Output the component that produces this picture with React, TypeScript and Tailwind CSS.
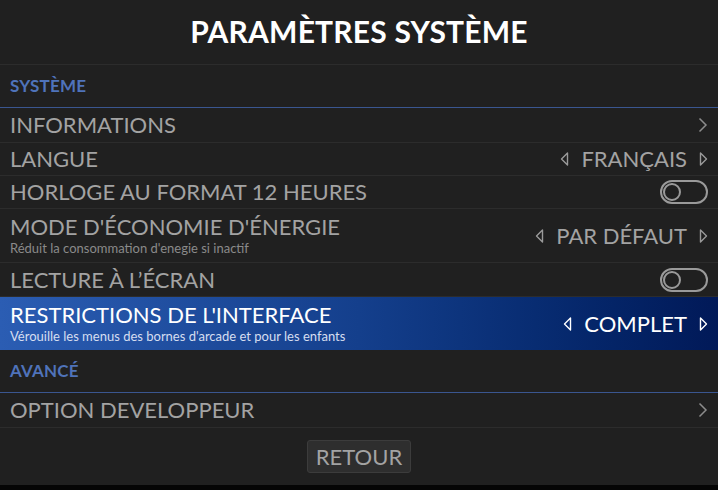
import React from "react";

const font = { fontFamily: "Lato, 'Open Sans', sans-serif" };

function TriLeft({ color }: { color: string }) {
    return (
        <svg width="9" height="16" viewBox="0 0 9 16" className="shrink-0">
            <polygon points="7.5,2 1.5,8 7.5,14" fill="none" stroke={color} strokeWidth="1.4" strokeLinejoin="round" />
        </svg>
    );
}

function TriRight({ color }: { color: string }) {
    return (
        <svg width="9" height="16" viewBox="0 0 9 16" className="shrink-0">
            <polygon points="1.5,2 7.5,8 1.5,14" fill="none" stroke={color} strokeWidth="1.4" strokeLinejoin="round" />
        </svg>
    );
}

function Chevron() {
    return (
        <svg width="10" height="16" viewBox="0 0 10 16" className="shrink-0">
            <polyline points="1.5,1.5 8,8 1.5,14.5" fill="none" stroke="#8c8c8c" strokeWidth="1.5" />
        </svg>
    );
}

function Toggle() {
    return (
        <div className="w-[48px] h-[24px] rounded-full border-2 border-[#9a9a9a] flex items-center px-[1px]">
            <div className="w-[18px] h-[18px] rounded-full border-2 border-[#9a9a9a]" />
        </div>
    );
}

function Value({ text, active }: { text: string; active?: boolean }) {
    const c = active ? "#ffffff" : "#9a9a9a";
    return (
        <div className="flex items-center gap-[12px]">
            <TriLeft color={c} />
            <span className={`text-[22px] leading-none ${active ? "text-white" : "text-[#a3a3a3]"}`}>{text}</span>
            <TriRight color={c} />
        </div>
    );
}

function Section({ label }: { label: string }) {
    return (
        <div className="h-[43px] flex items-center pl-[10px] border-b border-[#3a5690]">
            <span className="text-[17px] font-bold text-[#4f73ba] tracking-[0.2px]">{label}</span>
        </div>
    );
}

function Row({
    title,
    desc,
    right,
    h,
    active,
}: {
    title: string;
    desc?: string;
    right: React.ReactNode;
    h: string;
    active?: boolean;
}) {
    return (
        <div
            className={`${h} flex items-center justify-between pl-[10px] pr-[10px] ${
                active ? "bg-gradient-to-r from-[#2b5db3] via-[#143f8c] to-[#011958]" : "border-b border-[#2c2c2c]"
            }`}
        >
            <div className="flex flex-col">
                <span className={`text-[22px] leading-[26px] ${active ? "text-white" : "text-[#a3a3a3]"}`}>{title}</span>
                {desc && (
                    <span className={`text-[13px] leading-[17px] ${active ? "text-[#d6def0]" : "text-[#8a8a8a]"}`}>{desc}</span>
                )}
            </div>
            {right}
        </div>
    );
}

export default function App() {
    return (
        <div className="w-[718px] h-[490px] bg-[#202020] flex flex-col overflow-hidden" style={font}>
            <div className="h-[65px] shrink-0 flex items-center justify-center border-b border-[#2c2c2c]">
                <h1 className="text-[30px] font-bold text-white tracking-[0.2px] -mt-[2px]">PARAMÈTRES SYSTÈME</h1>
            </div>
            <Section label="SYSTÈME" />
            <Row h="h-[35px]" title="INFORMATIONS" right={<Chevron />} />
            <Row h="h-[33px]" title="LANGUE" right={<Value text="FRANÇAIS" />} />
            <Row h="h-[33px]" title="HORLOGE AU FORMAT 12 HEURES" right={<Toggle />} />
            <Row
                h="h-[54px]"
                title="MODE D'ÉCONOMIE D'ÉNERGIE"
                desc="Réduit la consommation d'enegie si inactif"
                right={<Value text="PAR DÉFAUT" />}
            />
            <Row h="h-[34px]" title="LECTURE À L’ÉCRAN" right={<Toggle />} />
            <Row
                h="h-[53px]"
                active
                title="RESTRICTIONS DE L'INTERFACE"
                desc="Vérouille les menus des bornes d'arcade et pour les enfants"
                right={<Value text="COMPLET" active />}
            />
            <Section label="AVANCÉ" />
            <Row h="h-[35px]" title="OPTION DEVELOPPEUR" right={<Chevron />} />
            <div className="flex-1 flex items-start justify-center pt-[12px]">
                <button className="h-[33px] px-[8px] rounded-[3px] bg-[#2e2e2e] border border-[#3c3c3c] text-[22px] leading-none text-[#a3a3a3]">
                    RETOUR
                </button>
            </div>
            <div className="h-[5px] shrink-0 bg-[#050505]" />
        </div>
    );
}
